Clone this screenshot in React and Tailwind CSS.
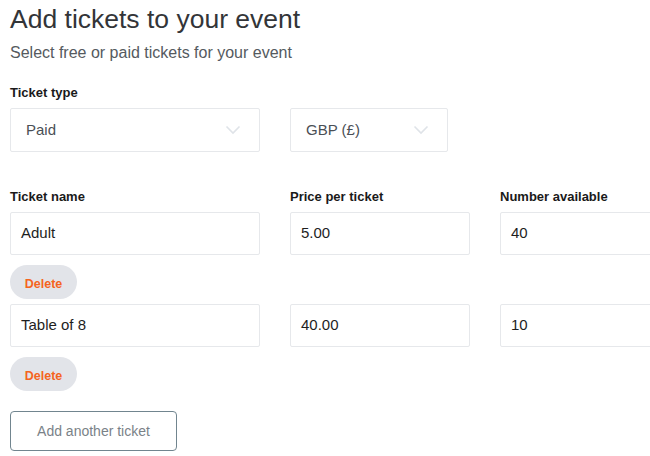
import React, { useState } from "react";

const Chevron = () => (
  <svg width="16" height="10" viewBox="0 0 16 10" fill="none" className="text-[#dfe3e8]">
    <path d="M1.5 1.5L8 8l6.5-6.5" stroke="currentColor" strokeWidth="1.6" />
  </svg>
);

const Select = ({ value, className }) => (
  <div
    className={`flex items-center justify-between h-[44px] border border-[#e6e8eb] rounded-[2px] bg-white pl-[15px] pr-[18px] text-[15px] text-[#4a4f55] ${className}`}
  >
    <span>{value}</span>
    <Chevron />
  </div>
);

const Field = ({ value, className }) => (
  <div
    className={`flex items-center h-[43px] border border-[#e6e8eb] rounded-[2px] bg-white px-[10px] text-[15px] text-[#1e1e1e] ${className}`}
  >
    {value}
  </div>
);

const DeleteButton = () => (
  <button className="h-[34px] w-[67px] rounded-full bg-[#e2e4e9] text-[12.5px] font-bold text-[#f5641e] pt-[5px]">
    Delete
  </button>
);

const App = () => {
  const [tickets] = useState([
    { name: "Adult", price: "5.00", qty: "40" },
    { name: "Table of 8", price: "40.00", qty: "10" },
  ]);

  return (
    <div className="w-[650px] h-[456px] overflow-hidden bg-white font-['Liberation_Sans',Arial,sans-serif]">
      <div className="w-[700px] pl-[10px]">
        <h1 className="text-[26.5px] leading-[30px] text-[#333538] pt-[4px]">Add tickets to your event</h1>
        <p className="text-[16px] leading-[20px] text-[#555a60] mt-[9px]">
          Select free or paid tickets for your event
        </p>

        <div className="mt-[22px] text-[13px] leading-[16px] font-bold text-[#1a1a1a]">Ticket type</div>
        <div className="flex gap-[30px] mt-[7px]">
          <Select value="Paid" className="w-[250px]" />
          <Select value="GBP (£)" className="w-[158px]" />
        </div>

        <div className="flex mt-[37px] text-[13px] leading-[16px] font-bold text-[#1a1a1a]">
          <div className="w-[280px]">Ticket name</div>
          <div className="w-[210px]">Price per ticket</div>
          <div>Number available</div>
        </div>

        <div className="mt-[7px] flex flex-col">
          {tickets.map((t, i) => (
            <div key={i} className={i > 0 ? "mt-[5px]" : ""}>
              <div className="flex gap-[30px]">
                <Field value={t.name} className="w-[250px]" />
                <Field value={t.price} className="w-[180px]" />
                <Field value={t.qty} className="w-[181px]" />
              </div>
              <div className="mt-[10px] flex">
                <DeleteButton />
              </div>
            </div>
          ))}
        </div>

        <button className="mt-[20px] w-[167px] h-[40px] border border-[#71858f] rounded-[4px] text-[14px] text-[#7a8288]">
          Add another ticket
        </button>
      </div>
    </div>
  );
};

export default App;
